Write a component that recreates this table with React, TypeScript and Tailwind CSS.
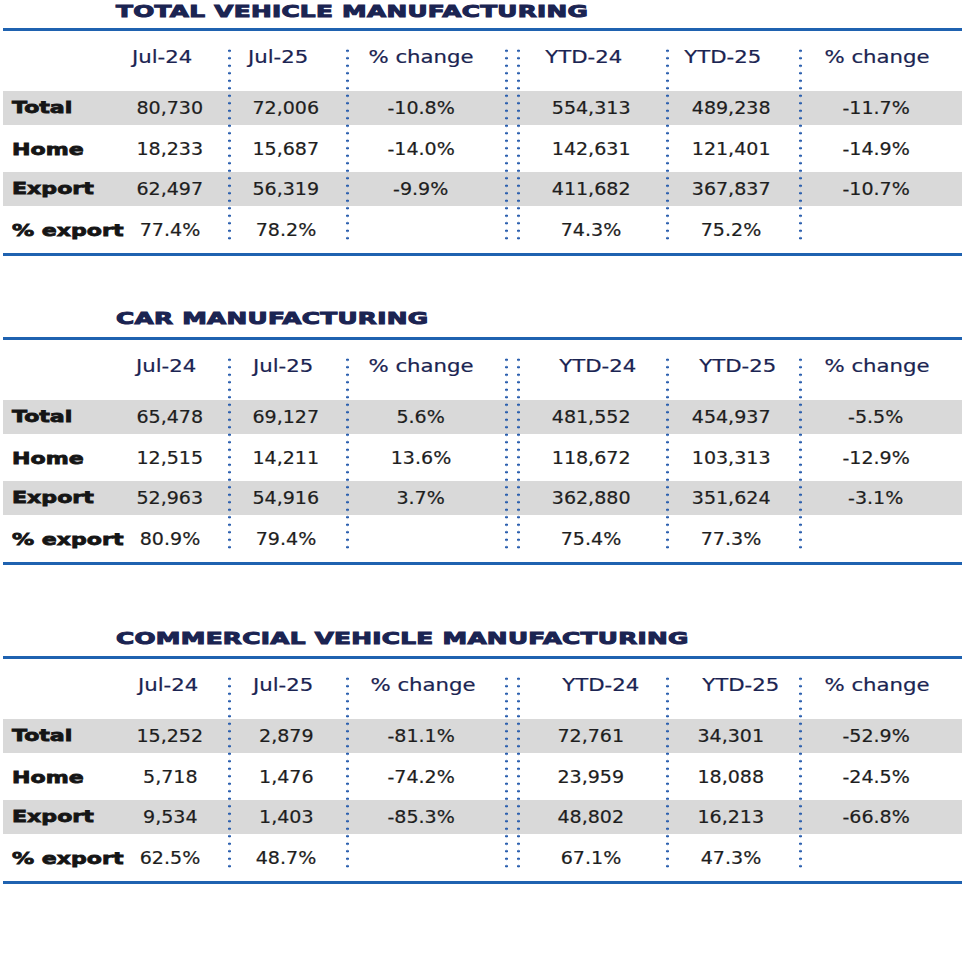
import React from "react";

type Row = { label: string; vals: string[] };

type SectionProps = {
  title: string;
  wrapClass: string;
  headClasses: string[];
  rows: Row[];
};

const headers = ["Jul-24", "Jul-25", "% change", "YTD-24", "YTD-25", "% change"];
const colStart = ["col-start-2", "col-start-4", "col-start-6", "col-start-10", "col-start-12", "col-start-14"];
const rowStart = ["row-start-2", "row-start-3", "row-start-4", "row-start-5"];
const dataPad = ["pr-[13px]", "pr-[5px]", "pr-[12px]", "pr-[4px]", "pr-[6px]", "pr-[12px]"];
const dividerCols = ["col-start-3", "col-start-5", "col-start-7", "col-start-9", "col-start-11", "col-start-13"];

function Section({ title, wrapClass, headClasses, rows }: SectionProps) {
  return (
    <div className={wrapClass}>
      <div className="h-[20px] pl-[113px] whitespace-nowrap">
        <span className="inline-block origin-left scale-x-[1.5] font-bold text-[16.5px] leading-[20px] tracking-[0.2px] text-[#1b2452] [-webkit-text-stroke:1px_#1b2452]">
          {title}
        </span>
      </div>
      <div className="h-[3px] bg-[#1f62b0]" />
      <div className="grid grid-cols-[122px_103px_3px_115px_3px_156px_3px_9px_3px_146px_3px_130px_3px_160px] grid-rows-[60px_34px_47px_34px_47px]">
        <div className="col-start-1 col-end-15 row-start-2 bg-[#d9d9d9]" />
        <div className="col-start-1 col-end-15 row-start-4 bg-[#d9d9d9]" />
        {dividerCols.map((c) => (
          <div
            key={c}
            className={`${c} row-start-1 row-end-6 mt-[16px] mb-[13px] w-[3px] bg-[radial-gradient(circle,#2b5fae_1.1px,transparent_1.5px)] bg-[length:3px_7.5px] bg-repeat-y`}
          />
        ))}
        {headers.map((h, i) => (
          <div
            key={"h" + i}
            className={`${colStart[i]} row-start-1 flex items-center justify-center pb-[7px] ${headClasses[i]}`}
          >
            <span className="inline-block scale-x-[1.25] text-[17px] leading-none text-[#1b2452] whitespace-nowrap [-webkit-text-stroke:0.2px_#1b2452]">
              {h}
            </span>
          </div>
        ))}
        {rows.map((r, ri) => (
          <React.Fragment key={r.label}>
            <div className={`col-start-1 ${rowStart[ri]} flex items-center pl-[9px] ${ri % 2 === 0 ? "" : "pt-[2px]"}`}>
              <span className="inline-block origin-left scale-x-[1.38] font-bold text-[16px] leading-none text-[#151515] whitespace-nowrap [-webkit-text-stroke:0.8px_#151515]">
                {r.label}
              </span>
            </div>
            {r.vals.map((v, vi) => (
              <div
                key={vi}
                className={`${colStart[vi]} ${rowStart[ri]} flex items-center justify-center ${dataPad[vi]} ${ri % 2 === 0 ? "" : "pt-[1px]"}`}
              >
                <span className="inline-block scale-x-[1.12] text-[17px] leading-none text-[#1e1e1e] whitespace-nowrap [-webkit-text-stroke:0.2px_#1e1e1e]">
                  {v}
                </span>
              </div>
            ))}
          </React.Fragment>
        ))}
      </div>
      <div className="h-[3px] bg-[#1f62b0]" />
    </div>
  );
}

export default function App() {
  const s1: Row[] = [
    { label: "Total", vals: ["80,730", "72,006", "-10.8%", "554,313", "489,238", "-11.7%"] },
    { label: "Home", vals: ["18,233", "15,687", "-14.0%", "142,631", "121,401", "-14.9%"] },
    { label: "Export", vals: ["62,497", "56,319", "-9.9%", "411,682", "367,837", "-10.7%"] },
    { label: "% export", vals: ["77.4%", "78.2%", "", "74.3%", "75.2%", ""] },
  ];
  const s2: Row[] = [
    { label: "Total", vals: ["65,478", "69,127", "5.6%", "481,552", "454,937", "-5.5%"] },
    { label: "Home", vals: ["12,515", "14,211", "13.6%", "118,672", "103,313", "-12.9%"] },
    { label: "Export", vals: ["52,963", "54,916", "3.7%", "362,880", "351,624", "-3.1%"] },
    { label: "% export", vals: ["80.9%", "79.4%", "", "75.4%", "77.3%", ""] },
  ];
  const s3: Row[] = [
    { label: "Total", vals: ["15,252", "2,879", "-81.1%", "72,761", "34,301", "-52.9%"] },
    { label: "Home", vals: ["5,718", "1,476", "-74.2%", "23,959", "18,088", "-24.5%"] },
    { label: "Export", vals: ["9,534", "1,403", "-85.3%", "48,802", "16,213", "-66.8%"] },
    { label: "% export", vals: ["62.5%", "48.7%", "", "67.1%", "47.3%", ""] },
  ];
  return (
    <div className="w-[962px] h-[964px] bg-white pl-[3px] font-['DejaVu_Sans',sans-serif] overflow-hidden">
      <Section
        title="TOTAL VEHICLE MANUFACTURING"
        wrapClass="flex flex-col [&>div:first-child]:mb-[8px]"
        headClasses={["pr-[29px]", "pr-[21px]", "pr-[12px]", "pr-[18px]", "pr-[22px]", "pr-[10px]"]}
        rows={s1}
      />
      <Section
        title="CAR MANUFACTURING"
        wrapClass="flex flex-col mt-[51px] [&>div:first-child]:mb-[10px]"
        headClasses={["pr-[21px]", "pr-[11px]", "pr-[12px]", "pl-[10px]", "pl-[8px]", "pr-[10px]"]}
        rows={s2}
      />
      <Section
        title="COMMERCIAL VEHICLE MANUFACTURING"
        wrapClass="flex flex-col mt-[62px] [&>div:first-child]:mb-[9px]"
        headClasses={["pr-[17px]", "pr-[11px]", "pr-[8px]", "pl-[16px]", "pl-[14px]", "pr-[10px]"]}
        rows={s3}
      />
    </div>
  );
}
